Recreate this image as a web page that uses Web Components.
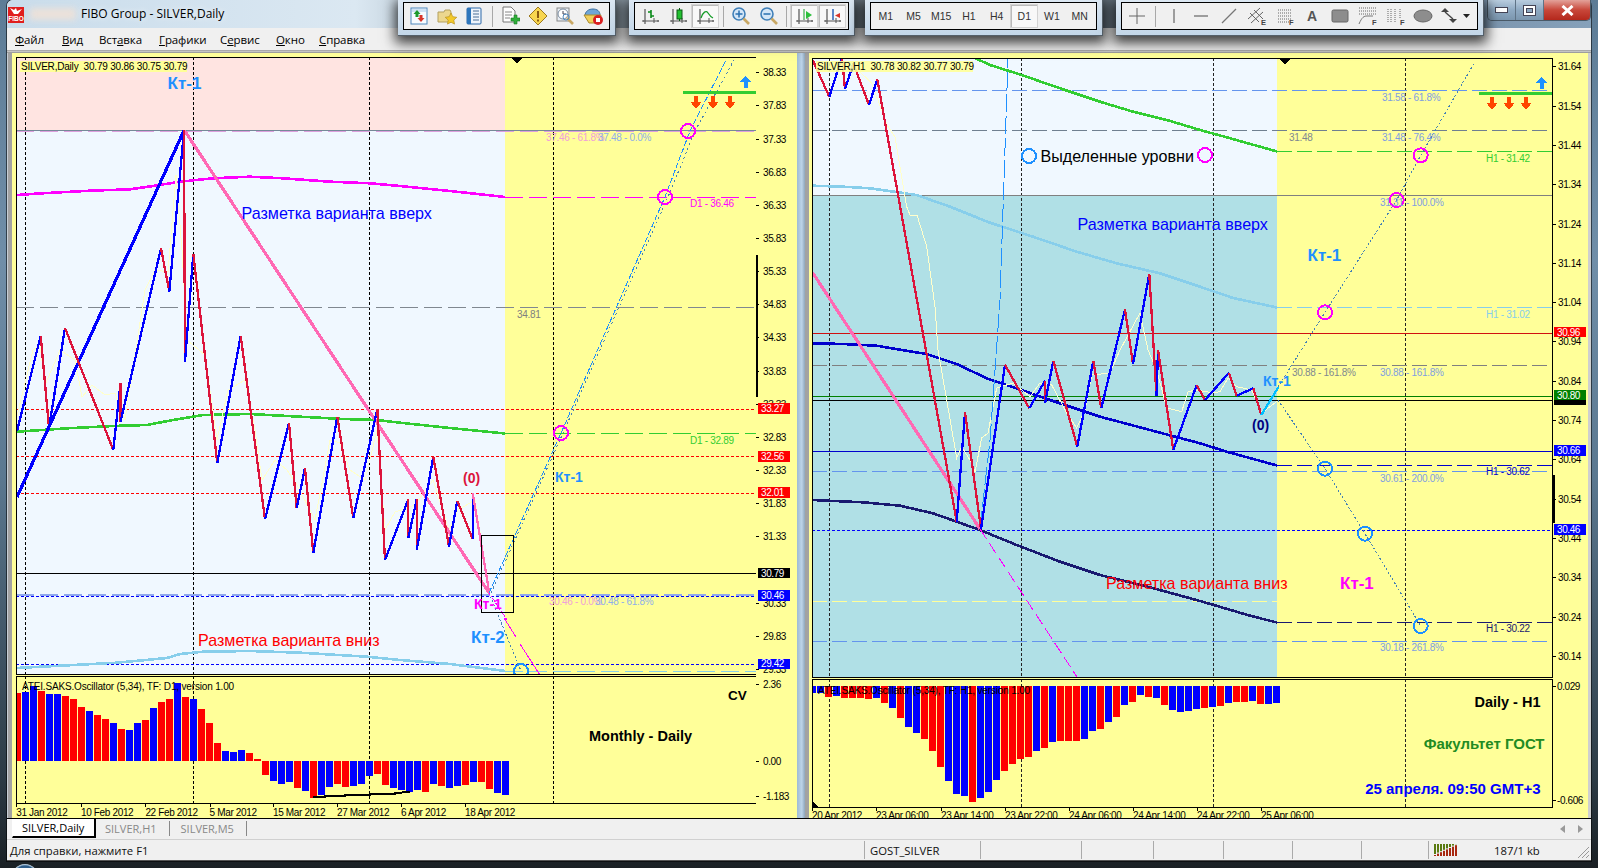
<!DOCTYPE html>
<html lang="ru"><head><meta charset="utf-8"><title>FIBO Group - SILVER,Daily</title>
<style>html,body{margin:0;padding:0;width:1598px;height:868px;overflow:hidden;background:#2a3036}</style></head>
<body>
<mt-app>
  <mt-titlebar slot="title">FIBO Group - SILVER,Daily</mt-titlebar>
  <mt-dock slot="dock">
    <mt-toolbar w="218">
      <mt-tool icon="market"></mt-tool><mt-tool icon="fav"></mt-tool><mt-tool icon="nav"></mt-tool><mt-sep></mt-sep>
      <mt-tool icon="newdoc"></mt-tool><mt-tool icon="warn"></mt-tool><mt-tool icon="tester"></mt-tool><mt-tool icon="hat"></mt-tool>
    </mt-toolbar>
    <mt-toolbar w="226" style="margin-left:13px">
      <mt-tool icon="bars"></mt-tool><mt-tool icon="candle"></mt-tool><mt-tool icon="line" active></mt-tool><mt-sep></mt-sep>
      <mt-tool icon="zoomin"></mt-tool><mt-tool icon="zoomout"></mt-tool><mt-sep></mt-sep>
      <mt-tool icon="auto" active></mt-tool><mt-tool icon="shift" active></mt-tool>
    </mt-toolbar>
    <mt-toolbar w="238" style="margin-left:10px">
      <mt-tool>M1</mt-tool><mt-tool>M5</mt-tool><mt-tool>M15</mt-tool><mt-tool>H1</mt-tool><mt-tool>H4</mt-tool><mt-tool active>D1</mt-tool><mt-tool>W1</mt-tool><mt-tool>MN</mt-tool>
    </mt-toolbar>
    <mt-toolbar w="368" style="margin-left:13px">
      <mt-tool icon="cross"></mt-tool><mt-sep narrow></mt-sep><mt-tool icon="vline"></mt-tool><mt-tool icon="hline"></mt-tool><mt-tool icon="trend"></mt-tool><mt-tool icon="channel"></mt-tool><mt-tool icon="fibo"></mt-tool><mt-tool icon="letter"></mt-tool><mt-tool icon="rect"></mt-tool><mt-tool icon="arcs"></mt-tool><mt-tool icon="ftime"></mt-tool><mt-tool icon="ellipse"></mt-tool><mt-tool icon="arrows"></mt-tool><mt-caret></mt-caret>
    </mt-toolbar>
  </mt-dock>
  <mt-menubar slot="menu">
    <span><u>Ф</u>айл</span><span><u>В</u>ид</span><span>Вст<u>а</u>вка</span><span><u>Г</u>рафики</span><span>С<u>е</u>рвис</span><span><u>О</u>кно</span><span><u>С</u>правка</span>
  </mt-menubar>
  <mt-chart slot="left" data="left"></mt-chart>
  <mt-chart slot="right" data="right"></mt-chart>
  <mt-tabs slot="tabs"><span class="on">SILVER,Daily</span><span>SILVER,H1</span><span>SILVER,M5</span></mt-tabs>
  <mt-statusbar slot="status"></mt-statusbar>
</mt-app>
<script>
/* ---------- svg helpers ---------- */
const FF='"Liberation Sans",Arial,sans-serif';
const poly=(p,c,w=1,d='')=>`<polyline fill="none" stroke="${c}" stroke-width="${w}" ${d?`stroke-dasharray="${d}"`:''} points="${p.map(a=>a.join(',')).join(' ')}"/>`;
const hl=(y,x1,x2,c,w=1,d='')=>poly([[x1,y],[x2,y]],c,w,d);
const vl=(x,y1,y2,c='#000',d='3 2')=>poly([[x,y1],[x,y2]],c,1,d);
const T=(x,y,s,c='#000',sz=10,o={})=>`<text x="${x}" y="${y}" fill="${c}" font-size="${sz}" dominant-baseline="central" text-anchor="${o.a||'start'}" font-weight="${o.b?'bold':'normal'}" ${o.ls!==undefined?`letter-spacing="${o.ls}"`:''} font-family='${FF}' style="shape-rendering:auto">${s}</text>`;
const small=(x,y,s,c)=>T(x,y,s,c,10,{ls:-0.3});
const zig=(pts,first=0,cols=['#0000FF','#DC143C'],w=2.3)=>{let o='';for(let i=0;i<pts.length-1;i++){o+=poly([pts[i],pts[i+1]],cols[(i+first)%2],w)}return o};
const circ=(x,y,c,r=7)=>`<circle cx="${x}" cy="${y}" r="${r}" fill="none" stroke="${c}" stroke-width="2"/>`;
const down=(cx,t,c='#FF4500')=>`<path d="M${cx-2} ${t}h4v6h3.5L${cx} ${t+13}L${cx-5.5} ${t+6}h3.5z" fill="${c}"/>`;
const up=(cx,t,c='#1E90FF')=>`<path d="M${cx-2} ${t+12}h4v-6h3.5L${cx} ${t}L${cx-5.5} ${t+6}h3.5z" fill="${c}"/>`;
const bars=(cols,vals,x0,zero,toY)=>{let o='';vals.forEach((v,i)=>{const x=Math.round(x0+8*i);const y=toY(v);const top=Math.min(y,zero),h=Math.abs(y-zero);o+=`<rect x="${x}" y="${top}" width="7" height="${h}" fill="${cols[i]=='r'?'#FF0000':'#0000FF'}"/>`});return o};
const MA=2.6;

/* ---------- left chart content ---------- */
const leftVert=[25.5,193.5,369.5,553.5];
const leftMain=()=>{let s='';
 s+=`<rect x="16" y="57" width="740" height="618" fill="#FFFF99"/><rect x="16" y="57" width="489" height="74" fill="#FFE4E1"/><rect x="16" y="131" width="489" height="544" fill="#F0F8FF"/>`;
 s+=`<path d="M511 58h12l-6 5z" fill="#000"/>`;
 leftVert.forEach(x=>s+=vl(x,57,675));
 s+=hl(130.5,16,756,'#778899',1)+hl(131.5,16,756,'#DDA0DD',1,'18 6');
 s+=hl(307.5,16,756,'#808890',1,'18 6');
 [409.5,456.5,493.5].forEach(y=>s+=hl(y,16,756,'#FF0000',1,'3 2'));
 s+=hl(573.5,16,756,'#000');
 s+=hl(595,16,756,'#8FA8EC',2,'18 6')+hl(596.5,16,756,'#0000FF',1,'3 2');
 s+=hl(664.5,16,756,'#0000FF',1,'3 2');
 s+=poly([[17,195],[42,193.3],[90,190.7],[130,189.3],[153,186],[180,181.7],[213,178.3],[250,176.7],[283,178.3],[330,181.7],[370,183.3],[400,186],[450,191],[505,197]],'#FF00FF',MA);
 s+=hl(197,505,756,'#FF00FF',1,'18 6');
 s+=poly([[17,431.7],[67,428.3],[113,426],[147,425],[173,420],[203,415],[250,414],[300,416.7],[343,419],[377,420],[400,422.7],[450,428],[505,433.5]],'#32CD32',MA);
 s+=hl(433.5,505,756,'#32CD32',1,'18 6');
 s+=poly([[17,668],[117,662.7],[167,658],[180,654],[203,651.7],[250,651],[300,652.7],[367,656.7],[400,660],[450,664],[505,671]],'#87CEEB',MA);
 s+=hl(671.5,505,756,'#87CEEB',1,'18 6');
 s+=poly([[17,416],[33,350],[40,345],[45,385],[60,350],[75,360],[82,397],[92,385],[105,395],[115,393],[125,420],[145,290],[155,270],[168,272],[176,175],[182,250],[187,340],[205,355],[217,440],[228,390],[245,380],[255,430],[262,480],[275,460],[287,470],[297,485],[315,520],[330,440],[340,443],[350,470],[365,480],[377,430],[385,530],[395,512],[415,505],[433,480],[449,530],[458,510],[475,500],[486,570]],'#FFFFCC',1);
 s+=poly([[17,497],[184,130.5]],'#0000FF',3.2);
 s+=poly([[184.5,130.5],[489.3,593.3]],'#FF69B4',3.2);
 const z=[[17,431],[40.7,335.7],[49,428],[65,328],[113.3,450],[120.5,383],[120.5,421.7],[161,248.3],[169.3,291.7],[184,130],[185,361.7],[193.3,254],[217.3,463],[240.7,335.7],[265,519.3],[289,423],[296.7,508],[305,468],[313.3,553],[337.3,416.7],[353.3,518],[377.3,409],[385,560],[408.3,499.3],[408.3,538],[416.7,499.3],[416.7,550],[433.3,456.7],[449,546.7],[457.3,500.7],[472.7,539.3],[472.7,492.7]];
 s+=zig(z);
 s+=poly([[472.7,492.7],[489.3,593.3]],'#FF69B4',2.3);
 s+=poly([[489,593],[561,433],[665,197],[690,131],[726,60]],'#1E90FF',1,'6 2');
 s+=poly([[491,593],[563,433],[668,197],[695,131],[734,60]],'#4682B4',1,'2 3');
 s+=poly([[489,593],[521,671]],'#4682B4',1,'2 2');
 s+=poly([[489,593],[507,620]],'#FF00FF',1,'2 1')+poly([[504,618],[516,637]],'#FF00FF',1)+poly([[520,644],[540,675]],'#FF00FF',1);
 s+=`<rect x="481.5" y="535.5" width="32" height="77" fill="none" stroke="#000"/>`;
 s+=circ(561,433,'#FF00FF')+circ(665,197,'#FF00FF')+circ(688,131,'#FF00FF')+circ(521,671,'#1E90FF');
 s+=hl(92.5,683,756,'#32CD32',3)+up(745.5,76)+down(696,96)+down(713,96)+down(730,96);
 s+=`<rect x="20" y="61" width="167" height="11" fill="#FFFF99"/>`+T(21,66.5,'SILVER,Daily&#160;&#160;30.79 30.86 30.75 30.79','#000',10,{ls:-0.2});
 s+=T(184.5,83,'Кт-1','#1E90FF',17,{b:1,a:'middle'});
 s+=T(241.5,213,'Разметка варианта вверх','#0000FF',16.1);
 s+=T(198,640,'Разметка варианта вниз','#FF0000',16.1);
 s+=T(555,477,'Кт-1','#1E90FF',14,{b:1});
 s+=T(463,478,'(0)','#DC143C',14,{b:1});
 s+=T(474,604,'Кт-1','#FF00FF',14,{b:1});
 s+=T(471,637,'Кт-2','#1E90FF',17,{b:1});
 s+=small(549,601,'30.46 - 0.0%','#F0A0D8')+small(595,601,'30.48 - 61.8%','#8FB0E8');
 s+=small(546,137,'37.46 - 61.8%','#F0A0D8')+small(598,137,'37.48 - 0.0%','#8FB0E8');
 s+=small(517,314,'34.81','#808080')+small(690,203,'D1 - 36.46','#FF00FF')+small(690,440,'D1 - 32.89','#32CD32');
 s+=`<rect x="16.5" y="57.5" width="739.5" height="617" fill="none" stroke="#000"/>`;
 return s};
const priceAxis=(list,x0,tx,bar)=>{let s='';list.forEach(([p,y])=>{s+=hl(y,x0,x0+3,'#000')+T(tx,y,p,'#000',10,{ls:-0.4})});s+=`<rect x="${bar[0]}" y="${bar[1]}" width="2" height="${bar[2]}" fill="#000"/>`;return s};
const tag=(x,y,h,c,t,w=31.5)=>`<rect x="${x}" y="${y}" width="${w}" height="${h}" fill="${c}"/>`+(t?T(x+3,y+h/2,t,'#fff',10,{ls:-0.4}):'');
const leftAxis=()=>{const l=[];for(let i=0;i<19;i++){if(i==15)continue;const p=38.33-i*0.5;l.push([p.toFixed(2),+(72.7+i*33.15).toFixed(1)])}
 let s=priceAxis(l,756,763,[756,255,142]);
 s+=tag(758,403,11,'#FF0000','33.27')+tag(758,451,10.5,'#FF0000','32.56')+tag(758,487,11,'#FF0000','32.01')+tag(758,568,10,'#000','30.79')+tag(758,590,11,'#0000FF','30.46')+tag(758,658.5,10.5,'#0000FF','29.42');
 return s};
const leftInd=()=>{const c='rbbrbbrrrbrrbrbbrbrrbrbrrrbbbrrrbbbrbrbbrrbbbrrbbbbrbrbbrbrrbb';
 const v=[100,96,78,93,102,102,108,117,141,153,165,177,189,207,210,189,180,144,126,117,69,111,117,147,189,249,273,276,270,279,297,345,363,372,366,384,393,414,405,381,372,381,378,372,348,342,375,384,390,396,390,396,372,378,384,378,375,366,366,387,399,405];
 let s=`<rect x="16" y="676" width="740" height="128" fill="#FFFF99"/>`;
 leftVert.forEach(x=>s+=vl(x,676,804));
 s+=bars(c,v,14,761,q=>Math.round(660+q/3));
 s+=poly([[313,797],[325,797],[325,796],[345,796],[345,795],[370,795],[370,794],[395,794],[395,793],[410,792]],'#000',2);
 s+=T(22,686.5,'ATEI.SAKS.Oscillator (5,34), TF: D1, version 1.00','#000',10,{ls:-0.17})+T(728,695,'CV','#000',13.5,{b:1})+T(589,736,'Monthly - Daily','#000',14.5,{b:1});
 s+=`<rect x="16.5" y="676.5" width="739.5" height="127" fill="none" stroke="#000"/>`;return s};
const indAxis=(x0,tx,l)=>{let s='';l.forEach(([p,y])=>s+=hl(y,x0,x0+3,'#000')+T(tx,y,p,'#000',10,{ls:-0.4}));return s};

/* ---------- right chart content ---------- */
const rightVert=[829.5,1021.5,1213.5,1405.5];
const rightMain=()=>{let s='';
 s+=`<rect x="812" y="58" width="741" height="620" fill="#FFFF99"/><rect x="812" y="58" width="465" height="137" fill="#F0F8FF"/><rect x="812" y="195" width="465" height="483" fill="#B0E0E6"/>`;
 s+=`<path d="M1279 59h12l-6 5z" fill="#000"/>`;
 rightVert.forEach(x=>s+=vl(x,58,678,'#222'));
 const D='15 5';
 s+=hl(90.5,812,1553,'#6495ED',1,D)+hl(130.5,812,1553,'#708090',1,D)+hl(195.5,812,1553,'#808080',1);
 s+=hl(151.5,1277,1553,'#32CD32',1,D)+hl(307.5,1277,1553,'#87CEEB',1,D)+hl(333.5,812,1553,'#D01010',1);
 s+=hl(365.5,812,1553,'#808080',1,D)+hl(396.5,812,1553,'#008000',1)+hl(400.5,812,1553,'#000',1);
 s+=hl(451.5,812,1553,'#0000CD',1)+hl(465.5,1277,1553,'#0000CD',1,D)+hl(471.5,812,1553,'#6495ED',1,D);
 s+=hl(530.5,812,1553,'#0000FF',1,'3 2')+hl(601.5,812,1277,'#FFFF99',1,D)+hl(622.5,1277,1553,'#191970',1,D)+hl(641.5,812,1553,'#6495ED',1,D);
 s+=poly([[975,58],[990,65],[1021.7,75],[1060,88.3],[1100,101.7],[1133,111.7],[1166.7,120],[1200,130],[1226.7,137.3],[1277,151.5]],'#32CD32',MA);
 s+=poly([[812.7,185.7],[843,186.7],[870,188.3],[916.7,195],[950,206.7],[990,222.7],[1033,236.7],[1076.7,251.7],[1116.7,263.3],[1160,273.3],[1200,286.7],[1233,298],[1277,307.5]],'#87CEEB',MA);
 s+=poly([[812.7,343.3],[843,344],[876.7,345.7],[901.7,350],[926.7,354],[956.7,364],[986.7,378.3],[1016.7,388.3],[1050,400],[1100,416.7],[1150,430],[1200,443.3],[1226.7,451.7],[1277,465.5]],'#0000CD',MA);
 s+=poly([[812.7,500],[863,502.3],[900,505.7],[933,513.3],[980,530],[1016.7,545],[1060,561.7],[1100,575],[1150,587.3],[1200,601],[1250,615.7],[1277,622.5]],'#191970',MA);
 s+=poly([[860,72],[871.7,83],[887,125],[895,137],[906.7,206.7],[910,215],[917,215],[926.7,246.7],[935,306.7],[938,350],[946.7,400],[956.7,458],[961.7,446.7],[971.7,463],[975,471.7],[981.7,438],[988,433],[996.7,388],[1013,383],[1030,396.7],[1040,383],[1051.7,385],[1066.7,413],[1076.7,428],[1085,410],[1091.7,375],[1110,373],[1120,350],[1140,313],[1148,350],[1156.7,370],[1166.7,408],[1181.7,411.7],[1188,391.7],[1196.7,390],[1213,393],[1220,391.7],[1228,378],[1236.7,386.7],[1251.7,390],[1261.7,413],[1276.7,401.7]],'#FFFFCC',1);
 s+=poly([[812.7,272.7],[980,529]],'#FF69B4',3.2);
 s+=poly([[980,529],[1077,677]],'#FF00FF',1,'12 5');
 s+=poly([[980,529],[990,440],[1000,300],[1008,58]],'#1E90FF',1,'18 4');
 const z=[[812.7,60],[829.3,96.7],[842,57],[845,89.3],[853.3,63.3],[869,105],[877.3,79.3],[956.7,521.7],[965,412.3],[981,529],[1005,364.7],[1029.3,408.3],[1045,380.7],[1045,403.3],[1053.3,360.7],[1077.3,446.7],[1093.3,360.7],[1101.3,408.3],[1125,309.3],[1133,364],[1149.3,274],[1156.5,396],[1158,350],[1173.3,450],[1196.7,385],[1205,400],[1229,372.7],[1236.7,395.7],[1253.3,388.3],[1261.3,415]];
 s+=zig(z,1);
 s+=poly([[1261.3,415],[1278.3,387.3]],'#00BFFF',2.3);
 s+=poly([[1278,387],[1325,312.3],[1396.7,200],[1420.7,155.3],[1475,61.7]],'#4682B4',1,'2 2');
 s+=poly([[1278,400],[1325,468.7],[1365,533.7],[1420.7,626]],'#4682B4',1,'2 2');
 s+=circ(1325,312.3,'#FF00FF')+circ(1396.7,200,'#FF00FF')+circ(1420.7,155.3,'#FF00FF')+circ(1205,155,'#FF00FF');
 s+=circ(1325,468.7,'#1E90FF')+circ(1365,533.7,'#1E90FF')+circ(1420.7,626,'#1E90FF')+circ(1029,156,'#1E90FF');
 s+=hl(93.5,1479,1553,'#32CD32',3)+up(1541.5,77)+down(1492,97)+down(1509,97)+down(1526,97);
 s+=`<rect x="816" y="61" width="157" height="11" fill="#FFFF99" fill-opacity=".9"/>`+T(817,66.5,'SILVER,H1&#160;&#160;30.78 30.82 30.77 30.79','#000',10,{ls:-0.22});
 s+=T(1040.5,156,'Выделенные уровни','#000',16.1);
 s+=T(1077.5,224,'Разметка варианта вверх','#0000FF',16.1);
 s+=T(1106,583,'Разметка варианта вниз','#FF0000',16.1);
 s+=T(1307.5,255,'Кт-1','#1E90FF',17,{b:1});
 s+=T(1263,381,'Кт-1','#1E90FF',14,{b:1});
 s+=T(1252,425,'(0)','#000080',14,{b:1});
 s+=T(1340,583,'Кт-1','#FF00FF',17,{b:1});
 const f='#7FA0E0';
 s+=small(1382,97,'31.58 - 61.8%',f)+small(1289,137,'31.48','#808890')+small(1382,137,'31.48 - 76.4%',f)+small(1380,202,'31.31 - 100.0%',f);
 s+=small(1292,372,'30.88 - 161.8%','#808890')+small(1380,372,'30.88 - 161.8%',f)+small(1380,478,'30.61 - 200.0%',f)+small(1380,647,'30.18 - 261.8%',f);
 s+=small(1486,158,'H1 - 31.42','#32CD32')+small(1486,314,'H1 - 31.02','#87CEEB')+small(1486,471.5,'H1 - 30.62','#0000CD')+small(1486,628.5,'H1 - 30.22','#191970');
 s+=`<rect x="812.5" y="58.5" width="740" height="619" fill="none" stroke="#000"/>`;
 return s};
const rightAxis=()=>{const l=[['31.64',66.7],['31.54',106.7],['31.44',145.7],['31.34',184.7],['31.24',224.7],['31.14',263.7],['31.04',302.7],['30.94',341.7],['30.84',381.7],['30.74',420.7],['30.64',459.7],['30.54',499.7],['30.44',538],['30.34',577.7],['30.24',617.7],['30.14',656.7]];
 let s=priceAxis(l,1553,1558,[1553,475,48]);
 s+=tag(1554,400,4.5,'#000','')+tag(1554,327,10,'#FF0000','30.96')+tag(1554,390,10,'#008000','30.80')+tag(1554,445,11,'#0000FF','30.66')+tag(1554,524,11,'#0000FF','30.46');
 return s};
const rightInd=()=>{const c='bbrbrrrrbrbrbbrrrbbbrbbbrrrrbrbrrrbbrbrbrbrbrbbbbrbrbrrbrbb';
 const v=[100,100,110,107,113,113,113,117,113,128,143,173,200,218,236,272,320,362,401,407,425,413,395,359,332,311,296,290,272,263,245,242,242,242,236,212,206,185,170,134,125,104,110,113,134,149,155,152,147,143,140,137,128,125,125,122,131,131,128];
 let s=`<rect x="812" y="679" width="741" height="129" fill="#FFFF99"/>`;
 rightVert.forEach(x=>s+=vl(x,679,808,'#222'));
 s+=bars(c,v,1273.3-8*(v.length-1),686,q=>Math.round(660+q/3));
 s+=T(818,690,'ATEI.SAKS.Oscillator (5,34), TF: H1, version 1.00','#000',10,{ls:-0.17});
 s+=T(1540.5,702,'Daily - H1','#000',14.5,{b:1,a:'end'})+T(1544.5,743.5,'Факультет ГОСТ','#228B22',15,{b:1,a:'end'})+T(1540.5,788,'25 апреля. 09:50 GMT+3','#0000FF',15,{b:1,a:'end'});
 s+=`<path d="M813 802l5 5h-5z" fill="#000"/>`;
 s+=`<rect x="812.5" y="679.5" width="740" height="128" fill="none" stroke="#000"/>`;return s};
const dateAxis=(x0,y0,l,ty)=>{let s='';l.forEach(([x,t])=>s+=vl(x+.5,y0,y0+3,'#000','')+T(x,ty,t,'#000',10,{ls:-0.35}));return s};

const CHARTS={
 left:{width:789,pad:[4,4],col:[740,41],row:[618,1,128,14],x:16,y:57,
  main:leftMain,axis:leftAxis,ind:leftInd,
  iaxis:()=>indAxis(756,763,[['2.36',684],['0.00',761],['-1.183',796]]),
  date:()=>dateAxis(16,804,[[16.2,'31 Jan 2012'],[81,'10 Feb 2012'],[145.4,'22 Feb 2012'],[209.6,'5 Mar 2012'],[273,'15 Mar 2012'],[337,'27 Mar 2012'],[401,'6 Apr 2012'],[465,'18 Apr 2012']],812.7)},
 right:{width:783,pad:[5,3],col:[741,35],row:[620,1,129,10],x:812,y:58,
  main:rightMain,axis:rightAxis,ind:rightInd,
  iaxis:()=>indAxis(1553,1557,[['0.029',686],['-0.606',800.7]]),
  date:()=>dateAxis(812,808,[[812,'20 Apr 2012'],[876,'23 Apr 06:00'],[941,'23 Apr 14:00'],[1005,'23 Apr 22:00'],[1069,'24 Apr 06:00'],[1133,'24 Apr 14:00'],[1197,'24 Apr 22:00'],[1261,'25 Apr 06:00']],815.7)}
};

/* ---------- icons ---------- */
const ax=(extra='')=>`<path d="M5 3v15M2 15h17M5 18v-1" stroke="#555" stroke-width="1.2" fill="none"/><path d="M14 12v5M3 15h1M17 15h2" stroke="#555" stroke-width="1" fill="none"/>${extra}`;
const lens=(m)=>`<circle cx="8" cy="8" r="6" fill="#d4e6f7" stroke="#3f7fb8" stroke-width="1.6"/><path d="M12.5 12.5l5.5 5.5" stroke="#c9a864" stroke-width="2.6"/>${m}`;
const F=(x,y,t='F')=>`<text x="${x}" y="${y}" font-size="7.5" font-weight="bold" fill="#444" font-family='${FF}'>${t}</text>`;
const dots=(ys,x1=3,x2=17)=>ys.map(y=>`<path d="M${x1} ${y}H${x2}" stroke="#666" stroke-dasharray="1 1"/>`).join('');
const ICONS={
 market:`<rect x="2" y="2" width="16" height="16" fill="#f6fbff" stroke="#4f88bd"/><path d="M3 3h14v3H3z" fill="#cfe2f3"/><path d="M8 4l-3.500 4h2v3h3v-3h2z" fill="#1d9a2c"/><path d="M12 16l3.500-4h-2v-3h-3v3h-2z" fill="#d8352a"/>`,
 fav:`<path d="M1 6h6l1-2h5l1 2v10H1z" fill="#ecd78f" stroke="#b3a060"/><path d="M14 7l1.800 3.700 4 .6-3 2.800.7 4-3.500-1.900-3.500 1.900.7-4-3-2.800 4-.6z" fill="#f3c92b" stroke="#b8901c" stroke-width=".7"/>`,
 nav:`<rect x="3" y="2" width="14" height="16" rx="1" fill="#eef4fb" stroke="#2d69a8"/><rect x="3" y="2" width="4" height="16" fill="#2e76bc"/><path d="M9 5h6M9 8h6M9 11h6M9 14h6" stroke="#4a6f96"/>`,
 newdoc:`<path d="M3 1h8l4 4v11H3z" fill="#fdfdfd" stroke="#777"/><path d="M5 6h7M5 9h7M5 12h5" stroke="#888"/><path d="M11 12h3v-3h3v3h3v3h-3v3h-3v-3h-3z" fill="#2fae3a" stroke="#1a7a24" stroke-width=".6"/>`,
 warn:`<path d="M10 1l9 9-9 9-9-9z" fill="#f8d650" stroke="#9c7a20"/><rect x="9" y="5" width="2" height="7" fill="#8a5a10"/><rect x="9" y="13.500" width="2" height="2" fill="#8a5a10"/>`,
 tester:`<rect x="2" y="2" width="12" height="13" fill="#e8eef5" stroke="#888"/><circle cx="8" cy="8" r="5" fill="#fff" stroke="#7a8ca0"/><path d="M8 5v3h3" stroke="#445" fill="none"/><path d="M12 12l6 6" stroke="#c9a864" stroke-width="2.600"/><circle cx="11" cy="11" r="3" fill="none" stroke="#4f88bd"/>`,
 hat:`<path d="M2 10c0-5 4-7 8-7s7 2 7 6" fill="#6fa5d6" stroke="#3e6f9e"/><path d="M1 9h17l-2 8H6z" fill="#f0cf5a" stroke="#a98a2a"/><circle cx="15" cy="14" r="5" fill="#d92020"/><rect x="13" y="12" width="4" height="4" fill="#fff"/>`,
 bars:ax(`<path d="M11 4v8M11 6H8M11 10h3" stroke="#0a8a1a" stroke-width="1.600" fill="none"/>`),
 candle:ax(`<rect x="9" y="4" width="5" height="9" fill="#22c030" stroke="#0b5a14"/><path d="M11.500 2v2M11.500 13v2" stroke="#0b5a14"/>`),
 line:ax(`<path d="M6 12c2-6 5-8 7-5s3 4 5 5" stroke="#159c28" stroke-width="1.300" fill="none"/>`),
 zoomin:lens(`<path d="M4.500 8h7M8 4.500v7" stroke="#2a70b0" stroke-width="1.500"/>`),
 zoomout:lens(`<path d="M4.500 8h7" stroke="#2a70b0" stroke-width="1.500"/>`),
 auto:ax(`<path d="M10 3v11" stroke="#159c28"/><path d="M12 5l6 4-6 4z" fill="#2cc03c"/>`),
 shift:ax(`<path d="M11 3v11" stroke="#2a62b8" stroke-width="1.500"/><path d="M18 7l-5 2.500 5 2.500z" fill="#d8352a"/>`),
 cross:`<path d="M10 2v16M2 10h16" stroke="#666"/>`,
 vline:`<path d="M10 3v14" stroke="#666" stroke-width="1.200"/>`,
 hline:`<path d="M3 10h14" stroke="#666" stroke-width="1.200"/>`,
 trend:`<path d="M3 17L17 3" stroke="#777" stroke-width="1.200"/>`,
 channel:`<path d="M1 13L13 2M4 17L16 6M3 7l9 9M7 4l9 9" stroke="#666" fill="none"/>${F(14,19,'E')}`,
 fibo:`${dots([4,7,10,13,16],4,17)}${F(15,19)}`,
 letter:`<text x="10" y="15" text-anchor="middle" font-size="14" font-weight="bold" fill="#555" font-family='${FF}'>A</text>`,
 rect:`<rect x="2" y="4" width="16" height="12" rx="1.500" fill="#8d8d8d" stroke="#666"/>`,
 arcs:`${dots([2,5,8],2,19)}<path d="M2 18c3-7 5-8 8-8h6" stroke="#777" fill="none"/>${F(15,19)}`,
 ftime:`<path d="M3 3v14M6 3v14M10 3v14M15 3v10" stroke="#666" stroke-dasharray="1 1"/>${F(15,19)}`,
 ellipse:`<ellipse cx="10" cy="10" rx="9" ry="6" fill="#8d8d8d" stroke="#666"/>`,
 arrows:`<path d="M5 2l4 4H1zM13 17l4-4H9z" fill="#444"/><path d="M5 6l8 7" stroke="#444" stroke-width="1.400"/>`
};

/* ---------- elements ---------- */
class Base extends HTMLElement{constructor(){super();this.attachShadow({mode:'open'})}}

customElements.define('mt-app',class extends Base{connectedCallback(){this.shadowRoot.innerHTML=`<style>
:host{display:block;position:relative;width:1598px;height:868px;overflow:hidden;background:linear-gradient(180deg,#5d7c96 0,#708ea8 30%,#5b7890 55%,#2c3a44 90%,#1a2024 100%);font:11px ${FF};color:#000}
.win{margin-left:7px;width:1584px;height:861px;display:flex;flex-direction:column;position:relative;background:#f0f0f0;border-radius:6px 6px 0 0;box-shadow:0 0 0 1px rgba(0,0,0,.55)}
.work{height:765px;display:flex;background:#c7ced5;padding-left:1px}
.split{width:8px;background:linear-gradient(90deg,#9fbbd4,#bcd3e8 60%,#8ea6bc)}
.rest{width:3px;background:#cfcfcf}
.lines{height:3px;background:linear-gradient(#8f8f8f,#d0d0d0 40%,#8b8b8b)}
::slotted(mt-dock){position:absolute;left:391px;top:0;z-index:5}
.orb{position:absolute;left:12px;top:864px;width:26px;height:26px;border-radius:50%;background:radial-gradient(#4f86b8,#2c5a86 60%,#cfe3f2 70%,#7aa0bc)}
</style><div class="win"><slot name="title"></slot><slot name="menu"></slot><div class="lines"></div><div class="work"><slot name="left"></slot><div class="split"></div><slot name="right"></slot><div class="rest"></div></div><slot name="tabs"></slot><slot name="status"></slot><slot name="dock"></slot></div><div class="orb"></div>`}});

customElements.define('mt-titlebar',class extends Base{connectedCallback(){this.shadowRoot.innerHTML=`<style>
:host{display:flex;align-items:center;height:28px;border-radius:6px 6px 0 0;background:linear-gradient(90deg,#c9dceb 0,#dbe8f2 22%,#a9b8c4 30%,#7d8b97 45%,#68757f 65%,#63778c 88%,#7d97b0 94%,#86a1ba 100%);font:12px "Open Sans","Liberation Sans",sans-serif;color:#000}
.logo{margin-left:1px;width:16px;height:16px;flex:none;background:#e01e1e;display:flex;align-items:flex-end;justify-content:center;position:relative;top:1px}
.logo b{font:bold 6.500px ${FF};color:#fff;line-height:8px}
.logo svg{position:absolute;left:2px;top:1px}
.smudge{width:46px;height:12px;margin-left:6px;background:#efe2d8;filter:blur(3px);opacity:.9;flex:none}
.t{margin-left:5px;white-space:nowrap;text-shadow:0 0 6px #fff;position:relative;top:-1px}
.ctl{margin-left:auto;align-self:flex-start;display:flex;height:20px;border:1px solid #4a5a68;border-top:0;border-radius:0 0 5px 5px;overflow:hidden}
.b{display:flex;align-items:center;justify-content:center;background:linear-gradient(#b9cddf,#8ea9c2 50%,#7b96ae)}
.b+.b{border-left:1px solid #5f7386}
.min,.max{width:27px}.x{width:46px;background:linear-gradient(#e3a29a,#c8473a 50%,#b4281c)}
</style><span class="logo"><svg width="12" height="7" viewBox="0 0 12 7"><path d="M0 0l4 2 2-2 1 3 5-2-4 5H4z" fill="#fff"/></svg><b>FIBO</b></span><span class="smudge"></span><span class="t"><slot></slot></span>
<span class="ctl"><span class="b min"><svg width="13" height="6"><rect x=".5" y=".5" width="12" height="5" fill="#fff" stroke="#445"/></svg></span><span class="b max"><svg width="13" height="11"><rect x=".5" y=".5" width="12" height="10" fill="#fff" stroke="#445"/><rect x="3.500" y="3.500" width="6" height="4" fill="#8ea9c2" stroke="#445"/></svg></span><span class="b x"><svg width="13" height="11"><path d="M1.500 1l10 9M11.500 1l-10 9" stroke="#fff" stroke-width="3"/></svg></span></span>`}});

customElements.define('mt-menubar',class extends Base{connectedCallback(){this.shadowRoot.innerHTML=`<style>
:host{display:flex;align-items:center;height:22px;padding-left:8px;background:#f0f0f0;font:11.500px "Open Sans","Liberation Sans",sans-serif;color:#000;letter-spacing:-.1px}
::slotted(span){white-space:nowrap}
::slotted(span:nth-child(1)){width:47px}::slotted(span:nth-child(2)){width:37px}::slotted(span:nth-child(3)){width:60px}::slotted(span:nth-child(4)){width:61px}::slotted(span:nth-child(5)){width:56px}::slotted(span:nth-child(6)){width:43px}
</style><slot></slot>`}});

customElements.define('mt-dock',class extends Base{connectedCallback(){this.shadowRoot.innerHTML=`<style>:host{display:flex;align-items:flex-start}</style><slot></slot>`}});

customElements.define('mt-toolbar',class extends Base{connectedCallback(){const w=this.getAttribute('w');this.shadowRoot.innerHTML=`<style>
:host{display:block;box-sizing:border-box;width:${w}px;height:36px;padding:2px 5px 5px;background:linear-gradient(#dce8f3,#c3d6e8);box-shadow:0 4px 12px 3px rgba(0,0,0,.75);border-right:1px solid #55606a;border-bottom:1px solid #55606a}
.in{display:flex;align-items:center;height:100%;box-sizing:border-box;border:1px solid #000;background:#f0f0f0;padding-left:1px}
</style><div class="in"><slot></slot></div>`}});

customElements.define('mt-tool',class extends Base{connectedCallback(){const ic=this.getAttribute('icon');const on=this.hasAttribute('active');this.shadowRoot.innerHTML=`<style>
:host{display:flex;align-items:center;justify-content:center;box-sizing:border-box;width:27.700px;height:24px;flex:none;font:10.500px ${FF};color:#333;${on?'background:#f8f8f8;border:1px solid #d3d3d3;box-shadow:inset 1px 1px #bbb':''}}
</style>${ic?`<svg width="20" height="20" viewBox="0 0 20 20">${ICONS[ic]||''}</svg>`:'<slot></slot>'}`}});

customElements.define('mt-sep',class extends Base{connectedCallback(){const n=this.hasAttribute('narrow');this.shadowRoot.innerHTML=`<style>:host{display:block;flex:none;width:1px;height:21px;background:#a8a8a8;margin:0 ${n?4:3.5}px}</style>`}});

customElements.define('mt-caret',class extends Base{connectedCallback(){this.shadowRoot.innerHTML=`<style>:host{display:block;flex:none;margin-left:-1px}svg{display:block}</style><svg width="7" height="4"><path d="M0 0h7L3.500 4z" fill="#222"/></svg>`}});

customElements.define('mt-chart',class extends Base{connectedCallback(){const c=CHARTS[this.getAttribute('data')];
 const [pw,aw]=c.col,[m,g,i,d]=c.row;
 const sv=(cls,x,y,w,h,html)=>`<svg class="${cls}" width="${w}" height="${h}" viewBox="${x} ${y} ${w} ${h}" font-family='${FF}'>${html}</svg>`;
 this.shadowRoot.innerHTML=`<style>
:host{display:block;box-sizing:border-box;width:${c.width}px;height:765px;background:#a2a2a2;padding-left:4px}
.frame{box-sizing:border-box;height:100%;background:#FFFF99;padding:${c.pad[0]}px 0 0 ${c.pad[1]}px;display:grid;grid-template-columns:${pw}px ${aw}px;grid-template-rows:${m}px ${g}px ${i}px ${d}px;overflow:hidden}
svg{display:block;shape-rendering:crispEdges}
.main{grid-area:1/1}.axis{grid-area:1/2}.ind{grid-area:3/1}.iaxis{grid-area:3/2}.date{grid-area:4/1/5/3}
text{shape-rendering:auto}
</style><div class="frame">${sv('main',c.x,c.y,pw,m,c.main())}${sv('axis',c.x+pw,c.y,aw,m,c.axis())}${sv('ind',c.x,c.y+m+g,pw,i,c.ind())}${sv('iaxis',c.x+pw,c.y+m+g,aw,i,c.iaxis())}${sv('date',c.x,c.y+m+g+i,pw+aw,d,c.date())}</div>`}});

customElements.define('mt-tabs',class extends Base{connectedCallback(){this.shadowRoot.innerHTML=`<style>
:host{display:flex;align-items:stretch;box-sizing:border-box;height:21px;border-top:1px solid #000;background:#f0f0f0;font:11px "Open Sans","Liberation Sans",sans-serif;color:#888;padding-left:5px;position:relative}
::slotted(span){display:flex;align-items:center;padding:0 12px 0 11px;position:relative;border-right:1px solid #888;height:15px;margin-top:2px;white-space:nowrap}
::slotted(span.on){color:#000;background:#fff;height:19px;margin-top:0;margin-right:-2px;width:84px;padding:0 0 0 9px;border:1px solid #000;border-top:0;border-left-color:#fff;border-bottom-width:2px;border-right-width:2px;box-sizing:border-box}
.nav{margin-left:auto;display:flex;align-items:center;gap:11px;padding-right:8px}
</style><slot></slot><span class="nav"><svg width="6" height="8"><path d="M5 0v8L0 4z" fill="#999"/></svg><svg width="6" height="8"><path d="M1 0v8l5-4z" fill="#999"/></svg></span>`}});

customElements.define('mt-statusbar',class extends Base{connectedCallback(){let b='';for(let i=0;i<8;i++){const h=i*1.4+1;b+=`<rect x="${i*3}" y="0" width="2" height="${11-h}" fill="#5a7a10"/><rect x="${i*3}" y="${12-h}" width="2" height="${h}" fill="#a82810"/>`}
 this.shadowRoot.innerHTML=`<style>
:host{display:flex;align-items:center;box-sizing:border-box;height:22px;background:#f0f0f0;border-top:1px solid #d0d0d0;border-bottom:1px solid #555;font:11.300px "Open Sans","Liberation Sans",sans-serif;color:#111;position:relative}
.c{box-sizing:border-box;height:18px;display:flex;align-items:center;border-left:1px solid #aaa;padding-left:5px;flex:none}
.first{width:857px;border:0;padding-left:3px}
.grip{position:absolute;right:1px;bottom:1px}
</style><span class="c first">Для справки, нажмите F1</span><span class="c" style="width:116px">GOST_SILVER</span><span class="c" style="width:101px"></span><span class="c" style="width:72px"></span><span class="c" style="width:70px"></span><span class="c" style="width:69px"></span><span class="c" style="width:69px"></span><span class="c" style="width:67px"></span><span class="c" style="width:160px"><svg width="24" height="12" style="flex:none">${b}</svg><span style="margin-left:36px;white-space:nowrap">187/1 kb</span></span>
<svg class="grip" width="14" height="14"><path d="M13 2L2 13M13 6L6 13M13 10l-3 3" stroke="#999"/></svg>`}});
</script>
</body></html>
